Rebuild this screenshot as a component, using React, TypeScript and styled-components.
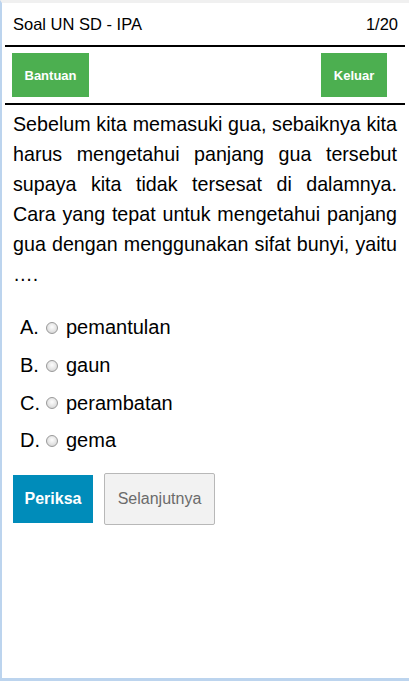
import styled, { createGlobalStyle } from "styled-components";

const GlobalStyle = createGlobalStyle`
    html, body {
        margin: 0;
        padding: 0;
        background: #ffffff;
    }
    body {
        font-family: "Liberation Sans", Arial, sans-serif;
        color: #000;
    }
`

const Frame = styled.div`
    box-sizing: border-box;
    width: 409px;
    height: 681px;
    border-left: 2px solid #bcd4ee;
    border-bottom: 3px solid #bcd4ee;
    border-top: 3px solid #f0f0f0;
    padding: 0 4px 0 3px;
    background: #fff;
`

const Header = styled.div`
    display: flex;
    justify-content: space-between;
    align-items: center;
    height: 42px;
    padding: 0 7px 0 8px;
    font-size: 16.5px;
`

const Rule = styled.div`
    height: 2px;
    background: #000;
`

const Toolbar = styled.div`
    display: flex;
    justify-content: space-between;
    padding: 6px 18px 6px 7px;
`

const GreenButton = styled.button<{ $w: number }>`
    width: ${p => p.$w}px;
    height: 44px;
    border: none;
    background: #4caf50;
    color: #fff;
    font-family: "Liberation Sans", Arial, sans-serif;
    font-weight: bold;
    font-size: 13px;
    padding: 0;
`

const Question = styled.p`
    margin: 0;
    padding: 4px 8px 0 8px;
    font-size: 19.68px;
    line-height: 30px;
    text-align: justify;
`

const Options = styled.div`
    display: flex;
    flex-direction: column;
    padding: 20px 0 0 15px;
`

const Option = styled.label`
    display: flex;
    align-items: center;
    height: 37.7px;
    font-size: 20px;
`

const Letter = styled.span`
    width: 26px;
`

const Radio = styled.span`
    box-sizing: border-box;
    width: 12px;
    height: 12px;
    border-radius: 50%;
    border: 1px solid #999;
    background: radial-gradient(circle at 50% 40%, #fdfdfd 0%, #e4e4e4 55%, #cacaca 100%);
    margin-right: 8px;
`

const Actions = styled.div`
    display: flex;
    align-items: center;
    gap: 11px;
    padding: 13px 0 0 8px;
`

const CheckButton = styled.button`
    width: 80px;
    height: 48px;
    border: none;
    background: #008cba;
    color: #fff;
    font-family: "Liberation Sans", Arial, sans-serif;
    font-weight: bold;
    font-size: 16px;
    padding: 0;
`

const NextButton = styled.button`
    box-sizing: border-box;
    width: 111px;
    height: 52px;
    border: 1px solid #b8b8b8;
    border-radius: 2px;
    background: #f2f2f2;
    color: #6b6b6b;
    font-family: "Liberation Sans", Arial, sans-serif;
    font-size: 16px;
    padding: 0;
`

const options = [
    ["A.", "pemantulan"],
    ["B.", "gaun"],
    ["C.", "perambatan"],
    ["D.", "gema"],
]

export default function App() {
    return <>
        <GlobalStyle />
        <Frame>
            <Header>
                <span>Soal UN SD - IPA</span>
                <span>1/20</span>
            </Header>
            <Rule />
            <Toolbar>
                <GreenButton $w={77}>Bantuan</GreenButton>
                <GreenButton $w={66}>Keluar</GreenButton>
            </Toolbar>
            <Rule />
            <Question>
                Sebelum kita memasuki gua, sebaiknya kita harus mengetahui panjang gua tersebut supaya kita tidak tersesat di dalamnya. Cara yang tepat untuk mengetahui panjang gua dengan menggunakan sifat bunyi, yaitu ….
            </Question>
            <Options>
                {options.map(([letter, text]) => (
                    <Option key={letter}>
                        <Letter>{letter}</Letter>
                        <Radio />
                        {text}
                    </Option>
                ))}
            </Options>
            <Actions>
                <CheckButton>Periksa</CheckButton>
                <NextButton>Selanjutnya</NextButton>
            </Actions>
        </Frame>
    </>
}
